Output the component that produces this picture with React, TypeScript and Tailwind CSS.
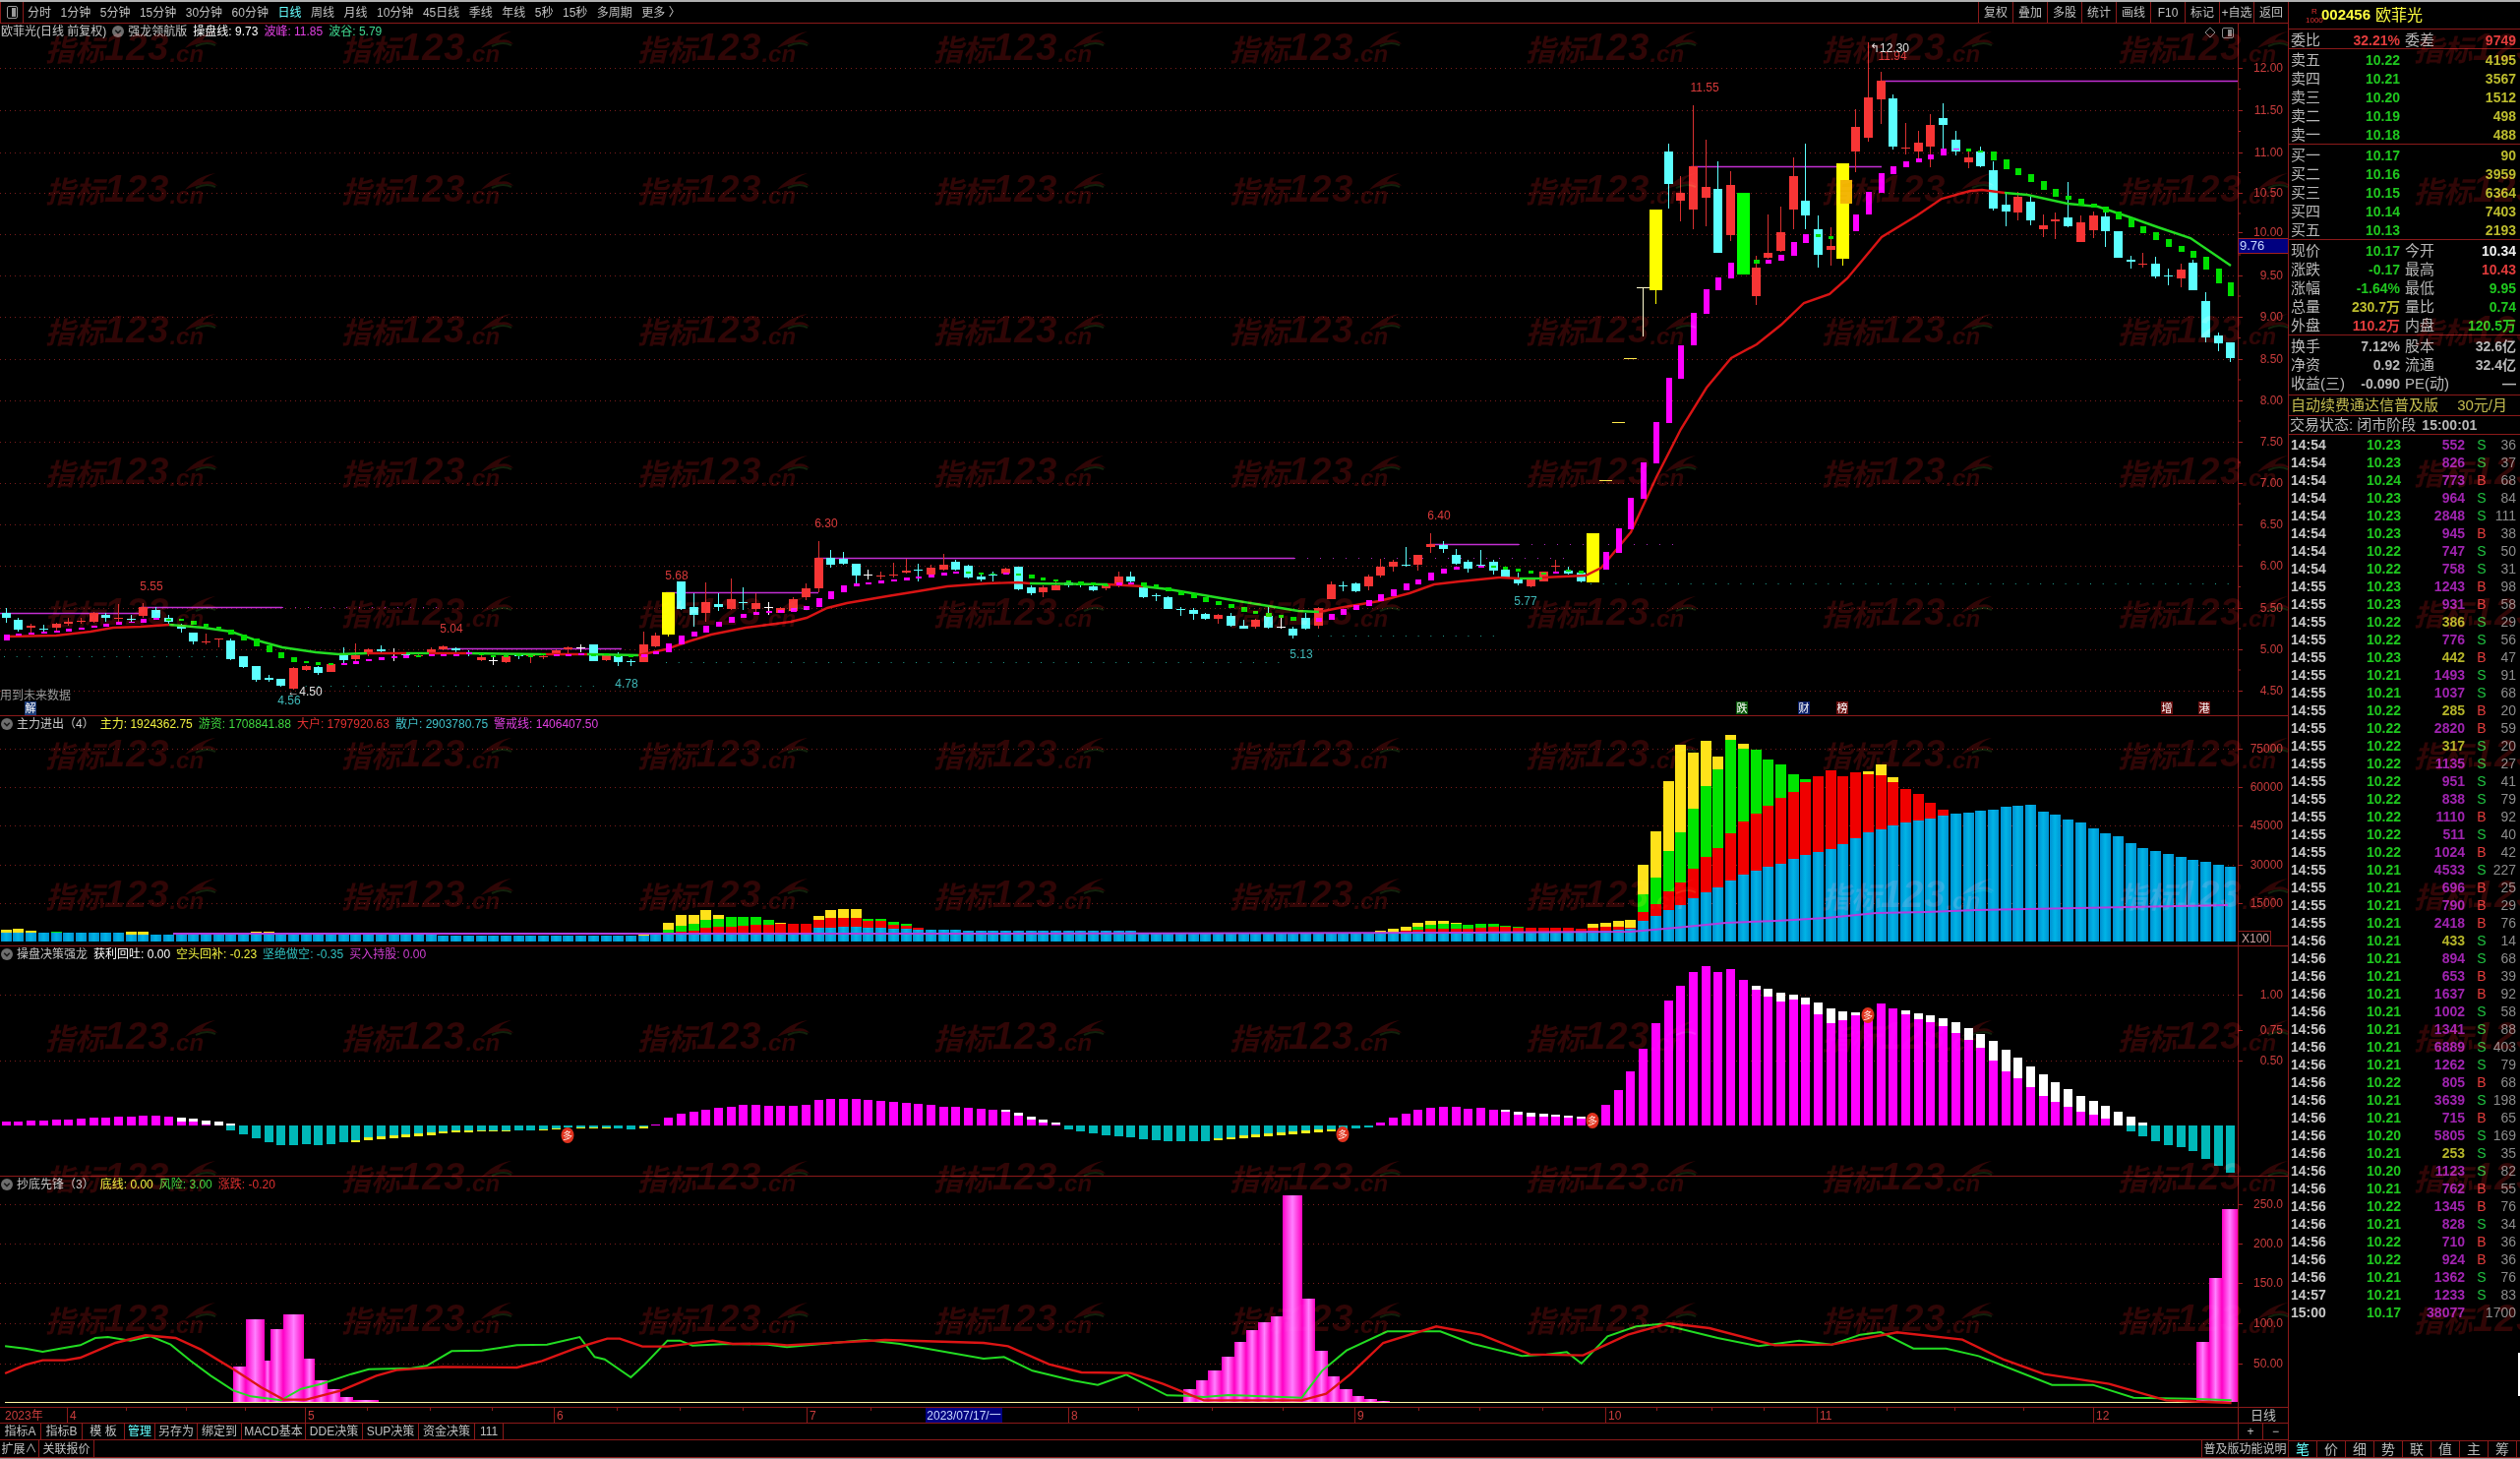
import React from "react";

// ---------- chart geometry ----------
const PLOT_W = 2275;
const AXIS_W = 52;
const barX = (i: number) => Math.round(5.7 + 12.706 * i);

type Kind = "r" | "c" | "w" | "y" | "g" | "d";
type Candle = [Kind, number, number, number, number]; // kind, body top, body bottom, high, low

const candles: Candle[] = [
  ["c",623,628,618,633],["c",630,640,628,642],["r",636,638,634,645],["c",639,640,635,643],["r",634,638,633,643],
  ["r",632,634,628,636],["r",631,632,628,634],["r",623,632,622,633],["c",625,628,623,632],["r",628,629,614,632],
  ["c",629,630,625,632],["r",617,626,613,628],["c",620,628,617,630],["c",628,632,625,636],["c",636,639,634,643],
  ["c",643,652,643,655],["r",652,653,644,655],["r",649,650,649,658],["c",651,670,649,671],["c",667,678,667,679],
  ["c",677,691,677,693],["c",689,691,686,693],["c",690,697,690,698],["r",679,700,678,701],["r",677,681,676,682],
  ["c",678,684,677,686],["r",675,683,674,683],["c",666,671,658,675],["r",666,670,654,673],["r",660,663,659,667],
  ["c",660,662,656,663],["w",664,665,659,672],["c",665,666,663,669],["r",666,667,663,668],["r",660,664,658,667],
  ["r",657,660,656,661],["c",659,661,658,663],["c",663,664,661,667],["r",668,671,665,672],["w",671,672,667,676],
  ["r",667,673,665,674],["c",666,667,664,670],["r",666,667,665,674],["r",667,668,665,670],["r",661,666,660,667],
  ["r",658,660,657,667],["w",658,659,655,663],["c",655,672,655,672],["r",666,671,665,672],["c",667,673,663,677],
  ["c",672,673,670,677],["r",655,673,642,673],["r",646,657,643,658],["y",602,645,602,647],["c",591,619,591,620],
  ["c",617,625,603,637],["r",612,623,592,632],["c",614,617,603,621],["r",609,619,588,620],["c",612,613,597,620],
  ["r",613,619,603,625],["w",617,618,612,625],["r",618,623,617,623],["r",609,621,607,622],["r",598,607,593,610],
  ["r",567,598,550,602],["c",567,574,559,577],["c",568,573,561,574],["c",573,585,573,593],["w",584,585,579,589],
  ["r",585,586,581,589],["r",584,585,572,587],["r",580,582,568,583],["c",579,580,573,591],["r",577,584,574,587],
  ["r",574,579,563,580],["c",571,579,569,580],["c",575,587,574,588],["c",586,589,582,591],["c",584,585,581,591],
  ["r",578,583,577,584],["c",576,599,576,600],["c",597,603,595,605],["r",597,602,595,607],["r",595,600,590,600],
  ["c",592,595,590,597],["c",593,595,591,597],["c",596,600,593,601],["r",595,598,593,600],["r",586,594,581,597],
  ["c",586,591,581,593],["c",597,607,593,608],["c",605,606,603,611],["c",607,619,606,619],["c",619,620,617,626],
  ["c",620,624,618,630],["c",624,629,623,630],["r",625,629,624,634],["c",626,636,623,637],["c",636,639,630,639],
  ["r",630,637,629,639],["c",626,638,617,639],["w",637,638,628,639],["c",639,646,637,649],["c",628,639,623,640],
  ["r",618,636,617,639],["r",594,609,591,609],["c",595,596,591,601],["c",593,601,592,602],["r",586,596,584,600],
  ["r",576,585,568,587],["r",571,576,569,581],["c",574,575,556,576],["r",564,574,564,580],["r",553,556,542,562],
  ["c",554,558,550,562],["c",564,573,558,574],["c",571,578,569,582],["c",574,575,559,577],["c",571,580,569,584],
  ["c",579,587,578,588],["c",588,593,582,595],["r",589,596,589,597],["r",581,591,581,591],["r",575,576,569,581],
  ["c",580,583,576,584],["c",582,591,580,592],["y",542,592,542,592],["d",488,489,488,489],["d",429,430,429,430],
  ["d",364,365,364,365],["d",292,293,292,342],["y",213,295,213,309],["c",154,187,146,212],["r",196,204,179,225],
  ["r",169,213,107,233],["r",190,201,142,230],["c",192,257,164,257],["r",188,239,174,245],["g",196,279,196,279],
  ["r",272,301,260,310],["r",257,262,218,263],["r",236,255,210,256],["r",179,213,160,233],["c",204,219,146,233],
  ["c",233,259,219,272],["r",250,254,231,270],["y",166,263,166,270],["r",129,154,111,175],["r",99,140,43,144],
  ["r",82,101,73,126],["c",100,149,96,152],["r",150,151,125,157],["r",145,154,133,161],["r",127,149,116,170],
  ["c",120,127,105,152],["c",142,154,133,158],["r",160,165,154,171],["c",154,169,149,170],["c",173,212,164,214],
  ["c",208,215,196,230],["r",200,216,195,224],["c",205,224,198,229],["r",229,233,218,241],["r",223,225,216,243],
  ["c",221,230,185,231],["r",226,246,219,246],["r",219,234,215,242],["c",220,235,216,251],["c",235,262,235,262],
  ["c",264,266,260,273],["r",268,269,257,272],["c",268,281,261,283],["c",280,281,273,290],["r",274,283,268,292],
  ["c",267,295,264,295],["c",306,343,297,348],["c",341,349,338,357],["c",348,364,348,368],
];

// trend markers that ride along the candles: bar index, top, bottom, m(agenta) or g(reen)
type Marker = [number, number, number, "m" | "g"];
const markers: Marker[] = [
  [0,645,651,"m"],[1,644,646,"m"],[2,643,645,"m"],[3,642,644,"m"],[4,641,643,"m"],[5,639,642,"m"],[6,638,640,"m"],
  [7,636,638,"m"],[8,634,637,"m"],[9,632,635,"m"],[10,632,633,"m"],[11,629,633,"m"],[12,628,630,"m"],[13,629,631,"g"],
  [14,629,631,"g"],[15,631,635,"g"],[16,634,637,"g"],[17,637,639,"g"],[18,640,645,"g"],[19,645,651,"g"],[20,649,657,"g"],
  [21,656,663,"g"],[22,663,669,"g"],[23,668,673,"g"],[24,672,674,"g"],[25,673,676,"g"],[26,674,676,"g"],[27,674,676,"m"],
  [28,672,675,"m"],[29,670,672,"m"],[30,668,671,"m"],[31,667,669,"m"],[32,666,669,"m"],[33,666,668,"g"],[34,665,667,"m"],
  [35,665,667,"m"],[36,665,667,"m"],[37,663,665,"m"],[38,664,666,"g"],[39,666,668,"g"],[40,666,668,"g"],[41,665,667,"g"],
  [42,666,668,"g"],[43,664,666,"g"],[44,665,667,"m"],[45,665,667,"m"],[46,664,666,"m"],[47,665,667,"g"],[48,664,666,"g"],
  [49,666,668,"g"],[50,666,668,"g"],[51,665,668,"m"],[52,662,665,"m"],[53,654,663,"m"],[54,646,655,"m"],[55,642,647,"m"],
  [56,636,643,"m"],[57,632,637,"m"],[58,627,633,"m"],[59,624,628,"m"],[60,622,625,"m"],[61,621,623,"m"],[62,620,623,"m"],
  [63,618,622,"m"],[64,616,620,"m"],[65,608,617,"m"],[66,601,609,"m"],[67,595,602,"m"],[68,593,596,"m"],[69,592,594,"m"],
  [70,590,593,"m"],[71,589,591,"m"],[72,587,590,"m"],[73,586,588,"m"],[74,584,587,"m"],[75,582,585,"m"],[76,581,583,"m"],
  [77,581,583,"g"],[78,582,584,"g"],[79,583,584,"g"],[80,582,584,"m"],[81,583,585,"g"],[82,584,588,"g"],[83,587,590,"g"],
  [84,589,591,"g"],[85,590,592,"g"],[86,591,595,"g"],[87,592,595,"g"],[88,594,596,"g"],[89,592,595,"m"],[90,592,594,"m"],
  [91,592,596,"g"],[92,594,597,"g"],[93,597,601,"g"],[94,601,605,"g"],[95,603,608,"g"],[96,607,612,"g"],[97,611,615,"g"],
  [98,614,618,"g"],[99,617,622,"g"],[100,621,624,"g"],[101,623,627,"g"],[102,625,628,"g"],[103,627,631,"g"],[105,628,632,"m"],
  [106,624,630,"m"],[107,619,625,"m"],[108,615,620,"m"],[109,610,616,"m"],[110,604,611,"m"],[111,599,606,"m"],[112,593,600,"m"],
  [113,589,594,"m"],[114,582,590,"m"],[115,578,583,"m"],[116,576,579,"m"],[118,575,577,"m"],[119,575,577,"g"],[120,576,579,"g"],
  [121,578,581,"g"],[122,580,583,"g"],[123,582,584,"g"],[124,581,583,"m"],[125,579,581,"g"],[126,580,583,"g"],
  [128,561,579,"m"],[129,537,562,"m"],[130,506,538,"m"],[131,470,507,"m"],[132,429,471,"m"],[133,384,430,"m"],[134,351,385,"m"],
  [135,318,351,"m"],[136,294,319,"m"],[137,282,295,"m"],[138,267,283,"m"],[140,264,268,"g"],[141,264,268,"m"],[142,259,265,"m"],
  [143,246,260,"m"],[144,238,247,"m"],[145,238,241,"g"],[146,240,243,"g"],[148,218,235,"m"],[149,195,218,"m"],[150,176,196,"m"],
  [151,169,177,"m"],[152,164,170,"m"],[153,161,165,"m"],[154,157,162,"m"],[155,151,158,"m"],[156,151,152,"m"],[157,151,154,"g"],
  [158,153,155,"g"],[159,154,163,"g"],[160,162,172,"g"],[161,171,178,"g"],[162,177,185,"g"],[163,184,193,"g"],[164,192,200,"g"],
  [165,199,203,"g"],[166,202,209,"g"],[167,207,211,"g"],[168,210,216,"g"],[169,215,223,"g"],[170,222,231,"g"],[171,230,237,"g"],
  [172,236,244,"g"],[173,243,251,"g"],[174,250,256,"g"],[175,255,262,"g"],[176,261,274,"g"],[177,273,288,"g"],[178,287,301,"g"],
];

type Seg = { c: "r" | "g"; pts: number[][] };
const trendLine: Seg[] = [
  { c: "r", pts: [[6,647],[57,646],[92,642],[115,638],[143,637],[172,635]] },
  { c: "g", pts: [[172,635],[184,636],[207,638],[235,642],[258,650],[287,658],[321,663],[344,665],[373,664]] },
  { c: "r", pts: [[373,664],[413,664]] },
  { c: "g", pts: [[413,664],[436,664]] },
  { c: "r", pts: [[436,664],[476,664]] },
  { c: "g", pts: [[476,664],[551,665]] },
  { c: "r", pts: [[551,665],[597,665]] },
  { c: "g", pts: [[597,665],[649,666]] },
  { c: "r", pts: [[649,666],[677,660],[700,652],[723,645],[758,638],[804,632],[820,628],[841,618],[861,613],[902,606],[933,601],[963,596],[1004,593],[1035,592],[1047,593]] },
  { c: "g", pts: [[1047,593],[1126,594]] },
  { c: "r", pts: [[1126,594],[1162,596]] },
  { c: "g", pts: [[1162,596],[1188,599],[1218,604],[1259,611],[1290,616],[1320,621],[1341,622]] },
  { c: "r", pts: [[1341,622],[1361,618],[1402,611],[1433,603],[1458,594],[1484,591],[1524,587],[1545,588]] },
  { c: "g", pts: [[1545,588],[1568,588]] },
  { c: "r", pts: [[1568,587],[1612,585],[1628,577],[1658,541],[1684,485],[1709,436],[1735,394],[1760,364],[1786,350],[1811,330],[1834,308],[1860,299],[1878,283],[1913,241],[1949,219],[1974,202],[2003,194],[2015,193],[2038,196]] },
  { c: "g", pts: [[2038,196],[2061,198],[2102,207],[2133,210],[2163,220],[2194,231],[2227,242],[2268,270]] },
];

const pressure = [
  [0,143,623],[143,287,617],[677,832,602],[830,1316,567],[1453,1544,553],[1719,1913,169],[1913,2275,82],[447,632,659],
];
const pressureDots = [
  [287,445,617],[1316,1600,567],[1544,1709,553],
];
const supportDots = [
  [4,224,667],[298,608,697],[677,1303,673],[1340,1530,646],[1617,2268,593],
];

const priceTicks: [string, number][] = [
  ["12.00",69],["11.50",112],["11.00",155],["10.50",196],["10.00",238],["9.50",280],["9.00",322],["8.50",365],
  ["8.00",407],["7.50",449],["7.00",491],["6.50",533],["6.00",575],["5.50",618],["5.00",660],["4.50",702],
];

const chartLabels = [
  { x: 154, y: 600, t: "5.55", c: "fill-[#d83a3a]" },
  { x: 459, y: 643, t: "5.04", c: "fill-[#d83a3a]" },
  { x: 688, y: 589, t: "5.68", c: "fill-[#d83a3a]" },
  { x: 840, y: 536, t: "6.30", c: "fill-[#d83a3a]" },
  { x: 1463, y: 528, t: "6.40", c: "fill-[#d83a3a]" },
  { x: 1733, y: 93, t: "11.55", c: "fill-[#d83a3a]" },
  { x: 1924, y: 61, t: "11.94", c: "fill-[#d83a3a]" },
  { x: 1921, y: 53, t: "↰12.30", c: "fill-[#e0e0e0]" },
  { x: 310, y: 707, t: "←4.50", c: "fill-[#e0e0e0]" },
  { x: 294, y: 716, t: "4.56", c: "fill-[#3fb8b8]" },
  { x: 637, y: 699, t: "4.78", c: "fill-[#3fb8b8]" },
  { x: 1323, y: 669, t: "5.13", c: "fill-[#3fb8b8]" },
  { x: 1551, y: 615, t: "5.77", c: "fill-[#3fb8b8]" },
];

const newsBadges = [
  { x: 1771, t: "跌", bg: "#0a5a0a" },
  { x: 1834, t: "财", bg: "#0a1f6a" },
  { x: 1873, t: "榜", bg: "#6a1010" },
  { x: 2203, t: "增", bg: "#6a1010" },
  { x: 2241, t: "港", bg: "#6a1010" },
];

// ---------- capital flow stacks: blue, red, green, yellow tops ----------
const sv = (v: number) => (v ? 700 + v / 3 : 0);
const flowTail = [
  [742,730,717,0],[745,727,717,0],[745,725,723,0],[745,730,727,0],[745,730,0,0],[745,730,0,0],[745,730,0,0],[745,730,0,0],[745,733,0,0],
  [738,728,0,717],[738,726,0,714],[735,726,0,708],[733,728,0,705],[708,682,627,537],[693,658,576,435],[675,618,495,282],[660,592,438,171],
  [638,549,366,195],[621,514,297,159],[606,486,246,207],[585,441,156,141],[567,405,183,168],[555,381,186,0],[543,357,216,0],[534,333,231,0],
  [519,315,261,0],[507,285,276,0],[498,267,0,0],[489,249,0,0],[474,267,0,0],[456,255,0,0],[438,261,0,252],[429,264,0,231],[417,285,0,270],
  [408,306,0,0],[402,321,0,0],[396,348,0,0],[387,369,0,0],[381,0,0,0],[378,0,0,0],[372,0,0,0],[369,0,0,0],[360,0,0,0],[357,0,0,0],[354,0,0,0],
  [375,0,0,0],[384,0,0,0],[399,0,0,0],[408,0,0,0],[426,0,0,0],[441,0,0,0],[450,0,0,0],[471,0,0,0],[486,0,0,0],[495,0,0,0],[504,0,0,0],
  [513,0,0,0],[522,0,0,0],[528,0,0,0],[537,0,0,0],[543,0,0,0],
].map((r) => r.map(sv));

const flowHead = [
  [948,0,0,945],[948,0,0,944],[948,0,0,946],[948,0,0,0],[948,0,947,0],[948,0,0,0],[948,0,0,0],[948,0,0,0],[948,0,0,0],[948,0,0,0],
  ...Array.from({ length: 25 }, (_, i) => (i === 0 || i === 1 || i === 10 || i === 11 ? [950,0,0,947] : [950,0,0,0])),
  ...Array.from({ length: 16 }, () => [951,0,0,0]),
  [951,0,0,949],[950,0,0,948],
  [949,948,945,938],[949,947,941,930],[949,946,939,930],[949,943,935,925],[949,942,934,930],[949,942,932,0],[949,941,932,0],[949,940,932,0],
  [949,940,935,0],[948,939,0,938],[948,939,0,0],[948,939,0,0],[943,935,0,931],[943,933,0,925],[942,933,0,924],[942,933,0,924],[943,936,934,0],[943,936,934,0],
  [944,940,937,0],[944,941,939,0],[945,943,0,0],[945,0,0,0],[945,0,0,0],[945,0,0,0],
  ...Array.from({ length: 14 }, () => [946,0,0,0]),
  ...Array.from({ length: 19 }, () => [948,0,0,0]),
  [948,0,0,946],[948,0,0,944],[948,946,0,942],[947,945,942,938],[947,944,940,936],[947,944,939,936],[947,944,939,938],[947,944,940,0],
];
const flowBars = [...flowHead, ...flowTail];

const alertLine = [[176,949],[520,949],[1000,949],[1500,948],[1658,947],[1704,943],[1755,938],[1806,936],[1857,933],[1908,928],[1959,927],[2010,925],[2061,924],[2112,923],[2163,922],[2265,920]];

// ---------- decision histogram: magenta top, white top, cyan bottom, yellow bottom ----------
const dv = (v: number) => (v ? 950 + v / 3 : 0);
const macdHead = [
  [570,0,0,588],[570,0,0,0],[567,0,0,0],[567,0,0,0],[564,0,0,0],[564,0,0,0],[561,0,0,0],[558,0,0,0],[558,0,0,0],[555,0,0,0],[555,0,0,0],[552,0,0,0],
  [552,0,0,0],[555,0,0,0],[570,558,0,0],[570,561,0,0],[579,567,0,0],[582,570,0,0],[0,576,597,0],[0,0,609,0],[0,0,621,0],[0,0,633,0],[0,0,642,0],[0,0,642,0],
  [0,0,639,0],[0,0,642,0],[0,0,639,0],[0,0,633,0],[0,0,627,633],[0,0,618,627],[0,0,615,624],[0,0,612,621],[0,0,609,618],[0,0,606,615],[0,0,603,612],
  [0,0,600,606],[0,0,597,603],[0,0,597,603],[0,0,597,600],[0,0,597,600],[0,0,597,600],[0,0,597,0],[0,0,597,0],[0,0,594,597],[0,0,591,594],[0,0,588,0],
  [0,0,588,591],[0,0,588,591],[0,0,588,591],[0,0,591,0],[0,0,594,0],[0,0,585,591],[580,0,0,0],[558,0,0,0],[546,0,0,0],[540,0,0,0],[534,0,0,0],[528,0,0,0],
  [525,0,0,0],[519,0,0,0],[519,0,0,0],[522,0,0,0],[522,0,0,0],
].map((r) => r.map(dv));
const macdMid = [
  [1124,0,0,0],[1123,0,0,0],[1118,0,0,0],[1117,0,0,0],[1117,0,0,0],[1117,0,0,0],[1118,0,0,0],[1119,0,0,0],[1120,0,0,0],[1121,0,0,0],[1122,0,0,0],
  [1123,0,0,0],[1125,0,0,0],[1125,0,0,0],[1126,0,0,0],[1127,0,0,0],[1128,0,0,0],[1130,1128,0,0],[1134,1131,0,0],[1138,1135,0,0],[1141,1138,0,0],[1143,1141,0,0],
  [0,0,1148,0],[0,0,1150,0],[0,0,1152,0],[0,0,1154,0],[0,0,1155,0],[0,0,1156,0],[0,0,1158,0],[0,0,1159,0],[0,0,1160,0],[0,0,1160,0],[0,0,1160,0],[0,0,1160,0],
  [0,0,1157,1159],[0,0,1156,1158],[0,0,1154,1157],[0,0,1153,1156],[0,0,1152,1155],[0,0,1151,1154],[0,0,1150,1153],[0,0,1149,1152],[0,0,1148,1151],[0,0,1148,1150],
  [0,0,1147,1149],[0,0,1147,0],[0,0,1146,0],[1141,0,0,0],[1136,0,0,0],[1132,0,0,0],[1128,0,0,0],[1126,0,0,0],[1125,0,0,0],[1125,0,0,0],[1127,0,0,0],
];
const macdTail = [
  [1278,0,0,0],[1285,0,0,0],[1290,1284,0,0],[1300,1290,0,0],[1305,1293,0,0],[1305,1296,0,0],[1305,1299,0,0],[1308,1302,0,0],[1312,1305,0,0],[1320,0,0,0],
  [1269,0,0,0],[1224,0,0,0],[1167,0,0,0],[1098,0,0,0],[1020,0,0,0],[951,0,0,0],[906,0,0,0],[864,0,0,0],[846,0,0,0],[864,0,0,0],[855,0,0,0],[888,0,0,0],
  [918,906,0,0],[939,915,0,0],[954,927,0,0],[948,933,0,0],[963,942,0,0],[993,957,0,0],[1020,975,0,0],[1011,984,0,0],[996,987,0,0],[1000,0,0,0],[960,0,0,0],
  [975,0,0,0],[993,981,0,0],[1008,990,0,0],[1017,996,0,0],[1029,1005,0,0],[1050,1017,0,0],[1071,1035,0,0],[1095,1053,0,0],[1134,1074,0,0],[1167,1101,0,0],
  [1188,1125,0,0],[1215,1152,0,0],[1242,1176,0,0],[1260,1200,0,0],[1275,1221,0,0],[1290,1242,0,0],[1299,1257,0,0],[1311,1272,0,0],[0,1290,0,0],[0,1305,1350,0],
  [0,1323,1365,0],[0,0,1380,0],[0,0,1392,0],[0,0,1398,0],[0,0,1410,0],[0,0,1434,0],[0,0,1455,0],[0,0,1476,0],
].map((r) => r.map(sv));
const macdBars = [...macdHead, ...macdMid, ...macdTail];
const MACD_ZERO = 1144;

// ---------- bottom-fishing pane ----------
const bottomBars = [
  [237,250,1389],[250,269,1341],[269,275,1383],[275,288,1351],[288,309,1336],[309,320,1381],[320,333,1403],[333,346,1412],[346,359,1420],[359,385,1423],
  [1203,1216,1412],[1216,1228,1403],[1228,1242,1393],[1242,1255,1379],[1255,1267,1364],[1267,1279,1352],[1279,1292,1344],[1292,1304,1338],[1304,1324,1215],
  [1324,1337,1320],[1337,1350,1373],[1350,1362,1399],[1362,1375,1412],[1375,1387,1419],[1387,1400,1422],[1400,1413,1424],
  [2233,2246,1364],[2246,2259,1299],[2259,2275,1229],
];

const toPts = (rows: number[][], sx: number, ox: number, oy: number) =>
  rows.map(([x, y]) => [ox + x / sx, oy + y / 3]);

const riskLine = [
  ...toPts([[10,1255],[50,1262],[85,1272],[120,1262],[160,1252],[190,1230],[215,1227],[260,1238],[300,1225],[340,1250],[380,1300],[420,1345],[465,1390],[500,1408],[560,1420],[600,1385],[640,1370],[700,1340],[735,1325],[820,1322],[850,1315],[900,1270],[960,1268],[1030,1252],[1090,1250],[1155,1227],[1185,1288],[1205,1295],[1257,1350],[1285,1310],[1330,1238],[1355,1238],[1380,1253],[1450,1248],[1530,1250],[1568,1258]], 1.96, 0, 950),
  [880,1362],[915,1366],
  ...toPts([[0,603],[25,598],[60,640],[110,670],[140,683],[175,652],[225,715],[250,716],[270,720],[300,714],[390,722],[415,640],[445,578],[495,520],[560,520],[600,558],[660,595],[690,590],[715,583],[733,618],[765,535],[800,505],[830,497],[900,540],[950,565],[1000,548],[1040,560],[1075,530],[1100,522],[1140,572],[1180,572],[1220,595],[1310,683],[1360,683],[1410,722],[1480,725],[1530,730]], 1.206, 1000, 1180),
];
const changeLine = [
  ...toPts([[10,1338],[50,1312],[85,1298],[130,1298],[160,1290],[230,1245],[290,1222],[350,1230],[400,1265],[465,1325],[520,1380],[565,1418],[610,1418],[680,1390],[750,1345],[790,1328],[880,1318],[1030,1320],[1080,1300],[1150,1260],[1210,1232],[1235,1232],[1280,1256],[1330,1256],[1420,1238],[1460,1248],[1530,1247],[1568,1252]], 1.96, 0, 950),
  [900,1362],
  ...toPts([[0,555],[30,565],[80,620],[120,645],[180,647],[220,680],[270,730],[390,730],[420,710],[450,650],[490,555],[555,505],[610,530],[670,590],[735,593],[790,530],[840,495],[890,510],[970,562],[1040,560],[1120,523],[1200,545],[1250,605],[1300,650],[1380,680],[1450,730],[1530,738]], 1.206, 1000, 1180),
];

const polyPts = (pts: number[][]) => pts.map((p) => p.join(",")).join(" ");

// ---------- quote panel data ----------
const sells = [["卖五","10.22","4195"],["卖四","10.21","3567"],["卖三","10.20","1512"],["卖二","10.19","498"],["卖一","10.18","488"]];
const buys = [["买一","10.17","90"],["买二","10.16","3959"],["买三","10.15","6364"],["买四","10.14","7403"],["买五","10.13","2193"]];

const GREEN = "text-[#1fc81f]";
const RED = "text-[#e23c3c]";
const OLIVE = "text-[#bcbc2e]";
const GRAY = "text-[#b8b8b8]";
const WHITE = "text-[#f0f0f0]";

const quoteRows = [
  ["现价","10.17",GREEN,"今开","10.34",WHITE],
  ["涨跌","-0.17",GREEN,"最高","10.43",RED],
  ["涨幅","-1.64%",GREEN,"最低","9.95",GREEN],
  ["总量","230.7万",OLIVE,"量比","0.74",GREEN],
  ["外盘","110.2万",RED,"内盘","120.5万",GREEN],
];
const fundRows = [
  ["换手","7.12%",GRAY,"股本","32.6亿",GRAY],
  ["净资","0.92",GRAY,"流通","32.4亿",GRAY],
  ["收益(三)","-0.090",GRAY,"PE(动)","—",GRAY],
];

const ticksRaw = `14:54 10.23 552 S 36
14:54 10.23 826 S 37
14:54 10.24 773 B 68
14:54 10.23 964 S 84
14:54 10.23 2848 S 111
14:54 10.23 945 B 38
14:54 10.22 747 S 50
14:54 10.22 758 S 31
14:55 10.23 1243 B 98
14:55 10.23 931 B 58
14:55 10.22 386 S 29
14:55 10.22 776 S 56
14:55 10.23 442 B 47
14:55 10.21 1493 S 91
14:55 10.21 1037 S 68
14:55 10.22 285 B 20
14:55 10.22 2820 B 59
14:55 10.22 317 S 20
14:55 10.22 1135 S 27
14:55 10.22 951 S 41
14:55 10.22 838 S 79
14:55 10.22 1110 B 92
14:55 10.22 511 S 40
14:55 10.22 1024 B 42
14:55 10.21 4533 S 227
14:55 10.21 696 B 25
14:55 10.21 790 B 29
14:55 10.21 2418 B 76
14:56 10.21 433 S 14
14:56 10.21 894 S 68
14:56 10.21 653 B 39
14:56 10.21 1637 B 92
14:56 10.21 1002 S 58
14:56 10.21 1341 S 88
14:56 10.21 6889 S 403
14:56 10.21 1262 S 79
14:56 10.22 805 B 68
14:56 10.21 3639 S 198
14:56 10.21 715 B 65
14:56 10.20 5805 S 169
14:56 10.21 253 S 35
14:56 10.20 1123 S 82
14:56 10.21 762 B 55
14:56 10.22 1345 B 76
14:56 10.21 828 S 34
14:56 10.22 710 B 36
14:56 10.22 924 B 36
14:56 10.21 1362 S 76
14:57 10.21 1233 S 83
15:00 10.17 38077 - 1700`;
const ticks = ticksRaw.split("\n").map((l) => l.split(" "));

const periods = ["分时","1分钟","5分钟","15分钟","30分钟","60分钟","日线","周线","月线","10分钟","45日线","季线","年线","5秒","15秒","多周期","更多 〉"];
const tools = ["复权","叠加","多股","统计","画线","F10","标记","+自选","返回"];
const indicatorTabs: [string, number][] = [["指标A",42],["指标B",42],["模 板",43],["管理",31],["另存为",43],["绑定到",45],["MACD基本",65],["DDE决策",58],["SUP决策",57],["资金决策",57],["111",29]];
const sideTabs = ["笔","价","细","势","联","值","主","筹"];

// ---------- small pieces ----------
function GridLine({ y }: { y: number }) {
  return <line x1={0} x2={PLOT_W} y1={y + 0.5} y2={y + 0.5} stroke="#7a1c1c" strokeDasharray="1 4" />;
}

function AxisTicks({ items }: { items: [string, number][] }) {
  return (
    <g>
      {items.map(([t, y]) => (
        <g key={t}>
          <line x1={PLOT_W} x2={PLOT_W + 5} y1={y + 0.5} y2={y + 0.5} stroke="#a02020" />
          <text x={2321} y={y + 4} textAnchor="end" className="fill-[#c83c3c] text-[12px]">{t}</text>
        </g>
      ))}
    </g>
  );
}

function ToggleDot() {
  return (
    <svg width="12" height="12" viewBox="0 0 12 12" className="flex-none">
      <circle cx="6" cy="6" r="6" fill="#6e6e6e" />
      <path d="M3.2 4.8 6 7.6l2.8-2.8" fill="none" stroke="#1a1a1a" strokeWidth="1.6" />
    </svg>
  );
}

function Legend({ title, items }: { title?: React.ReactNode; items: [string, string, string][] }) {
  return (
    <div className="absolute left-[1px] top-0 flex h-[16px] items-center gap-[6px] text-[12px] whitespace-nowrap">
      {title}
      {items.map(([name, value, color]) => (
        <span key={name} className={color}>{name}: {value}</span>
      ))}
    </div>
  );
}

function Watermark() {
  return (
    <div className="relative flex h-[30px] w-[175px] items-end font-bold italic leading-none text-[#300606]">
      <span className="text-[30px]">指标</span>
      <span className="text-[38px] tracking-[1px]">123</span>
      <span className="text-[24px]">.cn</span>
      <svg width="36" height="20" viewBox="0 0 36 20" className="absolute right-[-2px] top-[-6px]">
        <path d="M1 18C8 10 18 3 32 1 24 4 20 7 19 10 26 8 31 10 34 14 26 11 14 12 1 18Z" fill="#300606" />
        <path d="M12 16c6-3 14-4 20-1" fill="none" stroke="#12220c" strokeWidth="2" />
      </svg>
    </div>
  );
}

function PriceChart() {
  return (
    <svg width={PLOT_W + AXIS_W - 1} height={703} viewBox="0 24 2326 703" className="block">
      {priceTicks.map(([, y]) => <GridLine key={y} y={y} />)}
      {priceTicks.slice(0, -1).map(([, y], i) => (
        <line key={y} x1={PLOT_W} x2={PLOT_W + 3} y1={(y + priceTicks[i + 1][1]) / 2} y2={(y + priceTicks[i + 1][1]) / 2} stroke="#a02020" />
      ))}
      {pressure.map(([a, b, y]) => <line key={`${a}-${y}`} x1={a} x2={b} y1={y + 0.5} y2={y + 0.5} stroke="#c22fd2" strokeWidth={1.5} />)}
      {pressureDots.map(([a, b, y]) => <line key={`${a}-${y}`} x1={a} x2={b} y1={y + 0.5} y2={y + 0.5} stroke="#a827b8" strokeDasharray="1 12" />)}
      {supportDots.map(([a, b, y]) => <line key={`${a}-${y}`} x1={a} x2={b} y1={y + 0.5} y2={y + 0.5} stroke="#1fa090" strokeDasharray="1 11.7" />)}

      {candles.map(([kind, top, bottom, high, low], i) => {
        const x = barX(i);
        if (kind === "d") {
          const tone = i === 131 ? "#fffbd0" : "#ffe94a";
          return (
            <g key={i}>
              <rect x={x - 6} y={top} width={13} height={1} fill={tone} />
              {low > bottom && <rect x={x} y={top} width={1} height={low - top} fill={tone} />}
            </g>
          );
        }
        const fill = kind === "r" ? "#f73535" : kind === "c" ? "#5cffff" : kind === "w" ? "#ffffff" : kind === "y" ? "#ffff00" : "#00ff00";
        const wide = kind === "y" || kind === "g";
        return (
          <g key={i} shapeRendering="crispEdges">
            <rect x={x} y={high} width={1} height={low - high} fill={kind === "r" ? "#d83030" : fill} />
            <rect x={wide ? x - 6 : x - 4} y={top} width={wide ? 13 : 9} height={Math.max(bottom - top, 1)} fill={fill} />
          </g>
        );
      })}
      <rect x={1871} y={183} width={12} height={24} fill="#f0b400" />

      {trendLine.map((seg, i) => (
        <polyline key={i} points={polyPts(seg.pts)} fill="none" stroke={seg.c === "r" ? "#d81414" : "#22dc22"} strokeWidth={2.4} />
      ))}
      {markers.map(([i, top, bottom, c]) => (
        <rect key={i} x={barX(i) - 2} y={top} width={c === "g" && bottom - top < 4 ? 5 : 6} height={bottom - top} fill={c === "m" ? "#ff00ff" : "#00e000"} shapeRendering="crispEdges" />
      ))}

      {chartLabels.map((l) => (
        <text key={l.t} x={l.x} y={l.y} textAnchor="middle" className={`${l.c} text-[12px]`}>{l.t}</text>
      ))}
      <text x={0} y={711} className="fill-[#9a9a9a] text-[12px]">用到未来数据</text>
      <rect x={25} y={713} width={12} height={14} fill="#1c3c78" />
      <text x={31} y={724} textAnchor="middle" className="fill-white text-[11px]">解</text>
      {newsBadges.map((b) => (
        <g key={b.t}>
          <rect x={b.x - 6} y={713} width={12} height={13} fill={b.bg} />
          <text x={b.x} y={724} textAnchor="middle" className="fill-white text-[11px]">{b.t}</text>
        </g>
      ))}
      <path d="M2247 28l5 5-5 5-5-5z" fill="none" stroke="#8a8a8a" />
      <rect x={2259.5} y={28.5} width={11} height={10} rx={1.5} fill="none" stroke="#8a8a8a" />
      <rect x={2265} y={30} width={4} height={7} fill="#8a8a8a" />

      <line x1={PLOT_W + 0.5} x2={PLOT_W + 0.5} y1={24} y2={727} stroke="#8b1a1a" />
      <AxisTicks items={priceTicks.filter(([t]) => t !== "10.00").concat([["10.00", 236]])} />
      <rect x={2275.5} y={242.5} width={51} height={15} fill="#000080" stroke="#a02020" />
      <text x={2277} y={254} className="fill-[#c8d8ff] text-[13px]">9.76</text>
    </svg>
  );
}

const flowTicks: [string, number][] = [["75000",761],["60000",800],["45000",839],["30000",879],["15000",918]];

function FlowChart() {
  const base = 957;
  return (
    <svg width={2326} height={233} viewBox="0 728 2326 233" className="block">
      <defs>
        <linearGradient id="flowBlue" x1="0" x2="1" y1="0" y2="0">
          <stop offset="0" stopColor="#008fd0" />
          <stop offset="0.5" stopColor="#00b4e6" />
          <stop offset="1" stopColor="#0096d4" />
        </linearGradient>
      </defs>
      {flowTicks.map(([, y]) => <GridLine key={y} y={y} />)}
      {flowBars.map(([blue, red, green, yellow], i) => {
        const x = barX(i) - 5;
        const blocks: [number, number, string][] = [];
        let floor = base;
        const push = (top: number, fill: string) => {
          if (!top) return;
          blocks.push([top, floor, fill]);
          floor = top;
        };
        push(blue, "url(#flowBlue)");
        push(red, "#f00000");
        push(green, "#00e400");
        push(yellow, "#ffe21a");
        return (
          <g key={i} shapeRendering="crispEdges">
            {blocks.map(([t, b, fill]) => <rect key={t} x={x} y={t} width={10.5} height={b - t} fill={fill} />)}
          </g>
        );
      })}
      <polyline points={polyPts(alertLine)} fill="none" stroke="#b43ce0" strokeWidth={2} />
      <line x1={PLOT_W + 0.5} x2={PLOT_W + 0.5} y1={728} y2={961} stroke="#8b1a1a" />
      <AxisTicks items={flowTicks} />
      <rect x={2275.5} y={946.5} width={33} height={15} fill="#000" stroke="#8b1a1a" />
      <text x={2279} y={958} className="fill-[#c8a0a0] text-[12px]">X100</text>
    </svg>
  );
}

const macdTicks: [string, number][] = [["1.00",1011],["0.75",1047],["0.50",1078]];
const balloons = [[45,1154],[107,1153],[127,1139],[149,1032]];

function DecisionChart() {
  return (
    <svg width={2326} height={233} viewBox="0 962 2326 233" className="block">
      <GridLine y={1011} />
      <GridLine y={1078} />
      {macdBars.map(([mag, white, cyan, yellow], i) => {
        const x = barX(i) - 4.5;
        const w = 9.5;
        return (
          <g key={i} shapeRendering="crispEdges">
            {white > 0 && <rect x={x} y={white} width={w} height={(mag || MACD_ZERO) - white} fill="#ffffff" />}
            {mag > 0 && <rect x={x} y={mag} width={w} height={MACD_ZERO - mag} fill="#ff00ff" />}
            {cyan > 0 && <rect x={x} y={MACD_ZERO} width={w} height={cyan - MACD_ZERO} fill="#00b8b8" />}
            {yellow > 0 && cyan > 0 && <rect x={x} y={cyan} width={w} height={yellow - cyan} fill="#f0f020" />}
          </g>
        );
      })}
      {balloons.map(([i, y]) => (
        <g key={i}>
          <ellipse cx={barX(i)} cy={y} rx={6.5} ry={8} fill="#e0321e" />
          <text x={barX(i)} y={y + 4} textAnchor="middle" className="fill-[#ffe8e0] text-[10px]">多</text>
        </g>
      ))}
      <line x1={PLOT_W + 0.5} x2={PLOT_W + 0.5} y1={962} y2={1195} stroke="#8b1a1a" />
      <AxisTicks items={macdTicks} />
    </svg>
  );
}

const bottomTicks: [string, number][] = [["250.0",1224],["200.0",1264],["150.0",1304],["100.0",1345],["50.00",1386]];

function BottomChart() {
  return (
    <svg width={2326} height={234} viewBox="0 1196 2326 234" className="block">
      <defs>
        <linearGradient id="bottomPink" x1="0" x2="1" y1="0" y2="0">
          <stop offset="0" stopColor="#ff00c8" />
          <stop offset="0.5" stopColor="#ff80ff" />
          <stop offset="1" stopColor="#ff00c0" />
        </linearGradient>
      </defs>
      {bottomTicks.map(([, y]) => <GridLine key={y} y={y} />)}
      {bottomBars.map(([a, b, top]) => (
        <rect key={a} x={a} y={top} width={b - a} height={1425 - top} fill="url(#bottomPink)" shapeRendering="crispEdges" />
      ))}
      <line x1={5} x2={2268} y1={1425.5} y2={1425.5} stroke="#fff6a0" />
      <polyline points={polyPts(riskLine)} fill="none" stroke="#22dc22" strokeWidth={2} />
      <polyline points={polyPts(changeLine)} fill="none" stroke="#dc1414" strokeWidth={2.4} />
      <line x1={PLOT_W + 0.5} x2={PLOT_W + 0.5} y1={1196} y2={1430} stroke="#8b1a1a" />
      <AxisTicks items={bottomTicks} />
    </svg>
  );
}

const months: [string, number][] = [["4",68],["5",310],["6",563],["7",820],["8",1086],["9",1377],["10",1632],["11",1847],["12",2128]];
const weekTicks = [128,189,249,373,437,500,627,691,755,885,945,1010,1157,1232,1304,1442,1504,1568,1684,1740,1793,1918,1987,2057];

function TimeAxis() {
  return (
    <svg width={PLOT_W} height={15} viewBox="0 0 2275 15" className="block flex-none">
      <text x={5} y={12} className="fill-[#c83c3c] text-[12px]">2023年</text>
      {months.map(([m, x]) => (
        <g key={m}>
          <line x1={x + 0.5} x2={x + 0.5} y1={0} y2={15} stroke="#8b1a1a" />
          <text x={x + 3} y={12} className="fill-[#c83c3c] text-[12px]">{m}</text>
        </g>
      ))}
      {weekTicks.map((x) => <line key={x} x1={x + 0.5} x2={x + 0.5} y1={0} y2={3} stroke="#8b1a1a" />)}
      <rect x={941} y={0} width={78} height={15} fill="#000080" />
      <text x={980} y={12} textAnchor="middle" className="fill-[#c8d8ff] text-[12px]">2023/07/17/一</text>
    </svg>
  );
}

function QuoteRow({ row, h }: { row: string[]; h: string }) {
  const [a, av, ac, b, bv, bc] = row;
  return (
    <div className={`grid ${h} grid-cols-[44px_67px_auto_1fr] items-center pl-[2px] pr-[4px]`}>
      <span className={`text-[15px] whitespace-nowrap ${GRAY}`}>{a}</span>
      <span className={`text-right text-[14px] font-bold ${ac}`}>{av}</span>
      <span className={`pl-[5px] text-[15px] whitespace-nowrap ${GRAY}`}>{b}</span>
      <span className={`text-right text-[14px] font-bold ${bc}`}>{bv}</span>
    </div>
  );
}

function BookRow({ row }: { row: string[] }) {
  return (
    <div className="grid h-[19px] grid-cols-[44px_67px_1fr] items-center pl-[2px] pr-[4px]">
      <span className={`text-[15px] ${GRAY}`}>{row[0]}</span>
      <span className={`text-right text-[14px] font-bold ${GREEN}`}>{row[1]}</span>
      <span className={`text-right text-[14px] font-bold ${OLIVE}`}>{row[2]}</span>
    </div>
  );
}

function QuotePanel() {
  return (
    <div className="flex w-[235px] flex-none flex-col">
      <div className="relative flex h-[28px] flex-none items-center border-b border-[#8b1a1a] pl-[33px]">
        <span className="absolute left-[17px] top-[5px] text-center text-[8px] leading-[9px] text-[#e03030]">R<br />1000</span>
        <span className="text-[15px] font-bold text-[#ffff40]">002456</span>
        <span className="ml-[5px] text-[16px] text-[#ffff40]">欧菲光</span>
      </div>
      <div className="grid h-[20px] flex-none grid-cols-[44px_67px_auto_1fr] items-center border-b border-[#8b1a1a] pl-[2px] pr-[4px]">
        <span className={`text-[15px] ${GRAY}`}>委比</span>
        <span className={`text-right text-[14px] font-bold ${RED}`}>32.21%</span>
        <span className={`pl-[5px] text-[15px] ${GRAY}`}>委差</span>
        <span className={`text-right text-[14px] font-bold ${RED}`}>9749</span>
      </div>
      <div className="h-[97px] flex-none border-b border-[#8b1a1a]">
        {sells.map((r) => <BookRow key={r[0]} row={r} />)}
      </div>
      <div className="h-[97px] flex-none border-b border-[#8b1a1a]">
        {buys.map((r) => <BookRow key={r[0]} row={r} />)}
      </div>
      <div className="h-[97px] flex-none border-b border-[#8b1a1a]">
        {quoteRows.map((r) => <QuoteRow key={r[0]} row={r} h="h-[19px]" />)}
      </div>
      <div className="h-[61px] flex-none border-b border-[#8b1a1a]">
        {fundRows.map((r) => <QuoteRow key={r[0]} row={r} h="h-[19px]" />)}
      </div>
      <div className="flex h-[21px] flex-none items-center justify-between border-b border-[#8b1a1a] pl-[2px] pr-[13px] text-[15px] text-[#c4bc50]">
        <span>自动续费通达信普及版</span>
        <span>30元/月</span>
      </div>
      <div className={`flex h-[19px] flex-none items-center gap-[6px] border-b border-[#8b1a1a] pl-[1px] text-[15px] ${GRAY}`}>
        <span>交易状态: 闭市阶段</span>
        <span className="text-[14px] font-bold">15:00:01</span>
      </div>
      <div className="flex-1 overflow-hidden">
        {ticks.map(([time, price, vol, side, count], i) => (
          <div key={i} className="grid h-[18px] grid-cols-[60px_52px_65px_34px_minmax(0,1fr)] items-center pl-[2px] pr-[4px] text-[14px] font-bold">
            <span className="text-[#c8c8c8]">{time}</span>
            <span className={`text-right ${GREEN}`}>{price}</span>
            <span className={`text-right ${Number(vol) < 500 ? "text-[#b4b42a]" : "text-[#a024b0]"}`}>{vol}</span>
            <span className={`text-center font-normal ${side === "B" ? "text-[#e23c3c]" : "text-[#20c040]"}`}>{side === "-" ? "" : side}</span>
            <span className="justify-self-end whitespace-nowrap font-normal text-[#8c8c8c]">{count}</span>
          </div>
        ))}
      </div>
      <div className="flex h-[18px] flex-none border-t border-b border-[#8b1a1a]">
        {sideTabs.map((t, i) => (
          <span key={t} className={`flex w-[29px] items-center justify-center border-r border-[#8b1a1a] text-[14px] ${i === 0 ? "text-[#66ffff]" : GRAY}`}>{t}</span>
        ))}
      </div>
    </div>
  );
}

export default function App() {
  return (
    <div className="relative flex h-[1483px] w-[2562px] flex-col overflow-hidden bg-black [font-family:'Liberation_Sans','Noto_Sans_CJK_SC',sans-serif]">
      <div className="h-[2px] flex-none bg-[#b0b0b0]" />
      <div className="flex flex-1">
        {/* left: charts */}
        <div className="flex w-[2327px] flex-none flex-col border-r border-[#8b1a1a]">
          <div className="flex h-[22px] flex-none items-center border-b border-[#8b1a1a] text-[12px] text-[#c0c0c0]">
            <div className="flex h-full w-[24px] flex-none items-center justify-center border-x border-[#8b1a1a]">
              <div className="flex h-[13px] w-[11px] justify-end rounded-[2px] border border-[#9a9a9a] p-[1px]">
                <div className="w-[4px] bg-[#9a9a9a]" />
              </div>
            </div>
            <div className="ml-[4px] flex gap-[9.5px]">
              {periods.map((p) => (
                <span key={p} className={`whitespace-nowrap ${p === "日线" ? "text-[#66ffff]" : ""}`}>{p}</span>
              ))}
            </div>
            <div className="ml-auto flex h-full">
              {tools.map((t) => (
                <span key={t} className="flex w-[35px] items-center justify-center border-l border-[#8b1a1a]">{t}</span>
              ))}
            </div>
          </div>

          <div className="relative h-[704px] flex-none border-b border-[#8b1a1a]">
            <PriceChart />
            <Legend
              title={<><span className="text-[#c8c8c8]">欧菲光(日线 前复权)</span><ToggleDot /><span className="-ml-[2px] text-[#c8c8c8]">强龙领航版</span></>}
              items={[["操盘线","9.73","text-white"],["波峰","11.85","text-[#e040e0]"],["波谷","5.79","text-[#40d890]"]]}
            />
          </div>
          <div className="relative h-[234px] flex-none border-b border-[#8b1a1a]">
            <FlowChart />
            <Legend
              title={<><ToggleDot /><span className="-ml-[2px] text-[#c8c8c8]">主力进出（4）</span></>}
              items={[["主力","1924362.75","text-[#f0f040]"],["游资","1708841.88","text-[#40d840]"],["大户","1797920.63","text-[#e03030]"],["散户","2903780.75","text-[#40c0c8]"],["警戒线","1406407.50","text-[#e040e0]"]]}
            />
          </div>
          <div className="relative h-[234px] flex-none border-b border-[#8b1a1a]">
            <DecisionChart />
            <Legend
              title={<><ToggleDot /><span className="-ml-[2px] text-[#c8c8c8]">操盘决策强龙</span></>}
              items={[["获利回吐","0.00","text-white"],["空头回补","-0.23","text-[#f0f040]"],["坚绝做空","-0.35","text-[#30c0c0]"],["买入持股","0.00","text-[#d040d0]"]]}
            />
          </div>
          <div className="relative h-[235px] flex-none border-b border-[#8b1a1a]">
            <BottomChart />
            <Legend
              title={<><ToggleDot /><span className="-ml-[2px] text-[#c8c8c8]">抄底先锋（3）</span></>}
              items={[["底线","0.00","text-[#f0f040]"],["风险","3.00","text-[#40d840]"],["涨跌","-0.20","text-[#e03030]"]]}
            />
          </div>

          <div className="flex h-[16px] flex-none border-b border-[#8b1a1a]">
            <TimeAxis />
            <span className="flex flex-1 items-center justify-center border-l border-[#8b1a1a] text-[13px] text-[#c0c0c0]">日线</span>
          </div>
          <div className="flex h-[17px] flex-none border-b border-[#8b1a1a] text-[12px] text-[#c0c0c0]">
            {indicatorTabs.map(([t, w]) => (
              <span key={t} style={{ width: w }} className={`flex flex-none items-center justify-center border-r border-[#8b1a1a] whitespace-nowrap ${t === "管理" ? "text-[#66ffff]" : ""}`}>{t}</span>
            ))}
            <div className="ml-auto flex w-[51px] border-l border-[#8b1a1a]">
              <span className="flex w-[25px] items-center justify-center border-r border-[#8b1a1a]">+</span>
              <span className="flex flex-1 items-center justify-center">−</span>
            </div>
          </div>
          <div className="flex h-[18px] flex-none border-b border-[#8b1a1a] text-[12px] text-[#c0c0c0]">
            <span className="flex w-[40px] items-center justify-center border-r border-[#8b1a1a]">扩展∧</span>
            <span className="flex w-[56px] items-center justify-center border-r border-[#8b1a1a]">关联报价</span>
            <span className="ml-auto flex w-[88px] items-center justify-center border-l border-[#8b1a1a]">普及版功能说明</span>
          </div>
        </div>

        <QuotePanel />
      </div>
      <div className="h-[1px] flex-none bg-[#9a9a9a]" />

      {/* site watermark stamped across the whole window */}
      <div className="pointer-events-none absolute inset-0 grid grid-cols-[repeat(9,301px)] grid-rows-[repeat(10,143.5px)] pl-[46px] pt-[37px] mix-blend-screen">
        {Array.from({ length: 90 }, (_, i) => <Watermark key={i} />)}
      </div>
      {/* sliver of another window at the right edge */}
      <div className="absolute right-0 top-[1375px] h-[44px] w-[2px] bg-white" />
    </div>
  );
}
